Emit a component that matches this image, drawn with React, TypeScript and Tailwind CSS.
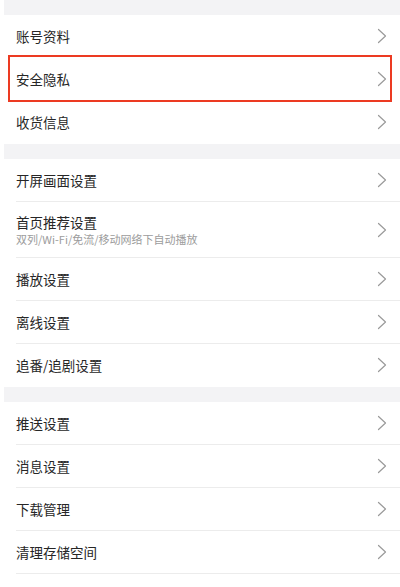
import React from "react";

type Item = { title: string; sub?: string };

const groups: Item[][] = [
  [{ title: "账号资料" }, { title: "安全隐私" }, { title: "收货信息" }],
  [
    { title: "开屏画面设置" },
    { title: "首页推荐设置", sub: "双列/Wi-Fi/免流/移动网络下自动播放" },
    { title: "播放设置" },
    { title: "离线设置" },
    { title: "追番/追剧设置" },
  ],
  [
    { title: "推送设置" },
    { title: "消息设置" },
    { title: "下载管理" },
    { title: "清理存储空间" },
    { title: "隐私权限设置" },
  ],
];

function Chevron() {
  return (
    <svg width="10" height="16" viewBox="0 0 10 16" fill="none" className="shrink-0">
      <path d="M1.5 1.5 L8.5 8 L1.5 14.5" stroke="#9a9a9a" strokeWidth="1.2" strokeLinecap="round" strokeLinejoin="round" />
    </svg>
  );
}

function Row({ item, divider }: { item: Item; divider: boolean }) {
  return (
    <div className="pl-4 bg-white">
      <div
        className={
          "flex items-center justify-between pr-[13px] " +
          (item.sub ? "h-[56px] " : "h-[43px] ") +
          (divider ? "border-b border-[#ececec]" : "border-b border-transparent")
        }
      >
        <div className="flex flex-col">
          <span className="text-[13.5px] leading-[18px] text-[#262626]">{item.title}</span>
          {item.sub && <span className="text-[11px] leading-[15px] text-[#9c9c9c] mt-[1px]">{item.sub}</span>}
        </div>
        <Chevron />
      </div>
    </div>
  );
}

export default function App() {
  return (
    <div
      className="relative w-[400px] h-[587px] overflow-hidden bg-white"
      style={{ fontFamily: '"Noto Sans CJK SC", "Noto Sans", sans-serif' }}
    >
      {groups.map((g, gi) => (
        <div key={gi}>
          <div className="h-[15px] ml-[4px] bg-[#f3f3f5]" />
          {g.map((item, i) => (
            <Row key={item.title} item={item} divider={gi !== 0 && i !== g.length - 1} />
          ))}
        </div>
      ))}

      {/* red highlight box */}
      <div className="absolute left-[8px] top-[55px] w-[384px] h-[47px] border-2 border-[#ec3a22]" />
    </div>
  );
}
